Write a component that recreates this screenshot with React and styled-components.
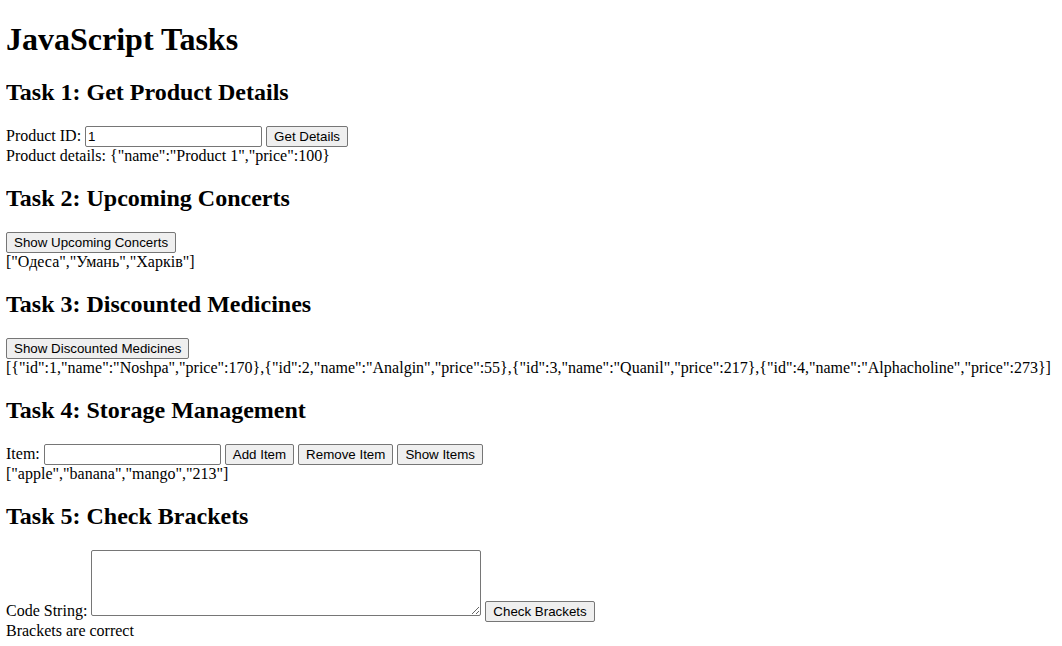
import React from "react";
import styled, { createGlobalStyle } from "styled-components";

const Global = createGlobalStyle`
  body {
    margin: 0 6px;
    font-family: "Liberation Serif", "Times New Roman", serif;
    font-size: 16px;
    color: #000;
    background: #fff;
  }
`;

const Title = styled.h1`
  font-size: 2em;
  font-weight: bold;
  margin: 21px 0 0.67em;
`;

const TaskTitle = styled.h2`
  font-size: 1.5em;
  font-weight: bold;
  margin: 0.83em 0;
`;

const Section = styled.div``;

const Label = styled.label``;

const TextInput = styled.input`
  box-sizing: border-box;
  width: 177px;
  height: 21px;
  padding: 1px 2px;
  border: 1px solid #767676;
  border-radius: 2px;
  font-family: "Liberation Sans", Arial, sans-serif;
  font-size: 13.33px;
  color: #000;
  background: #fff;
  vertical-align: baseline;
`;

const Button = styled.button`
  box-sizing: border-box;
  height: 21px;
  padding: 1px 7px;
  border: 1px solid #767676;
  border-radius: 2px;
  background: #efefef;
  font-family: "Liberation Sans", Arial, sans-serif;
  font-size: 13.33px;
  color: #000;
  margin: 0;
`;

const CodeArea = styled.textarea`
  box-sizing: border-box;
  width: 390px;
  height: 66px;
  padding: 2px;
  border: 1px solid #767676;
  border-radius: 2px;
  font-family: "Liberation Mono", monospace;
  font-size: 13.33px;
  margin: 0;
  vertical-align: baseline;
`;

const Output = styled.div``;

export default function App() {
  return (
    <>
      <Global />
      <Title>JavaScript Tasks</Title>
      <Section>
        <TaskTitle>Task 1: Get Product Details</TaskTitle>
        <Label>Product ID:</Label> <TextInput defaultValue="1" />{" "}
        <Button>Get Details</Button>
        <Output>Product details: {'{"name":"Product 1","price":100}'}</Output>
      </Section>
      <Section>
        <TaskTitle>Task 2: Upcoming Concerts</TaskTitle>
        <Button>Show Upcoming Concerts</Button>
        <Output>["Одеса","Умань","Харків"]</Output>
      </Section>
      <Section>
        <TaskTitle>Task 3: Discounted Medicines</TaskTitle>
        <Button>Show Discounted Medicines</Button>
        <Output>
          {'[{"id":1,"name":"Noshpa","price":170},{"id":2,"name":"Analgin","price":55},{"id":3,"name":"Quanil","price":217},{"id":4,"name":"Alphacholine","price":273}]'}
        </Output>
      </Section>
      <Section>
        <TaskTitle>Task 4: Storage Management</TaskTitle>
        <Label>Item:</Label> <TextInput />{" "}
        <Button>Add Item</Button> <Button>Remove Item</Button>{" "}
        <Button>Show Items</Button>
        <Output>["apple","banana","mango","213"]</Output>
      </Section>
      <Section>
        <TaskTitle>Task 5: Check Brackets</TaskTitle>
        <Label>Code String:</Label> <CodeArea />{" "}
        <Button>Check Brackets</Button>
        <Output>Brackets are correct</Output>
      </Section>
    </>
  );
}
